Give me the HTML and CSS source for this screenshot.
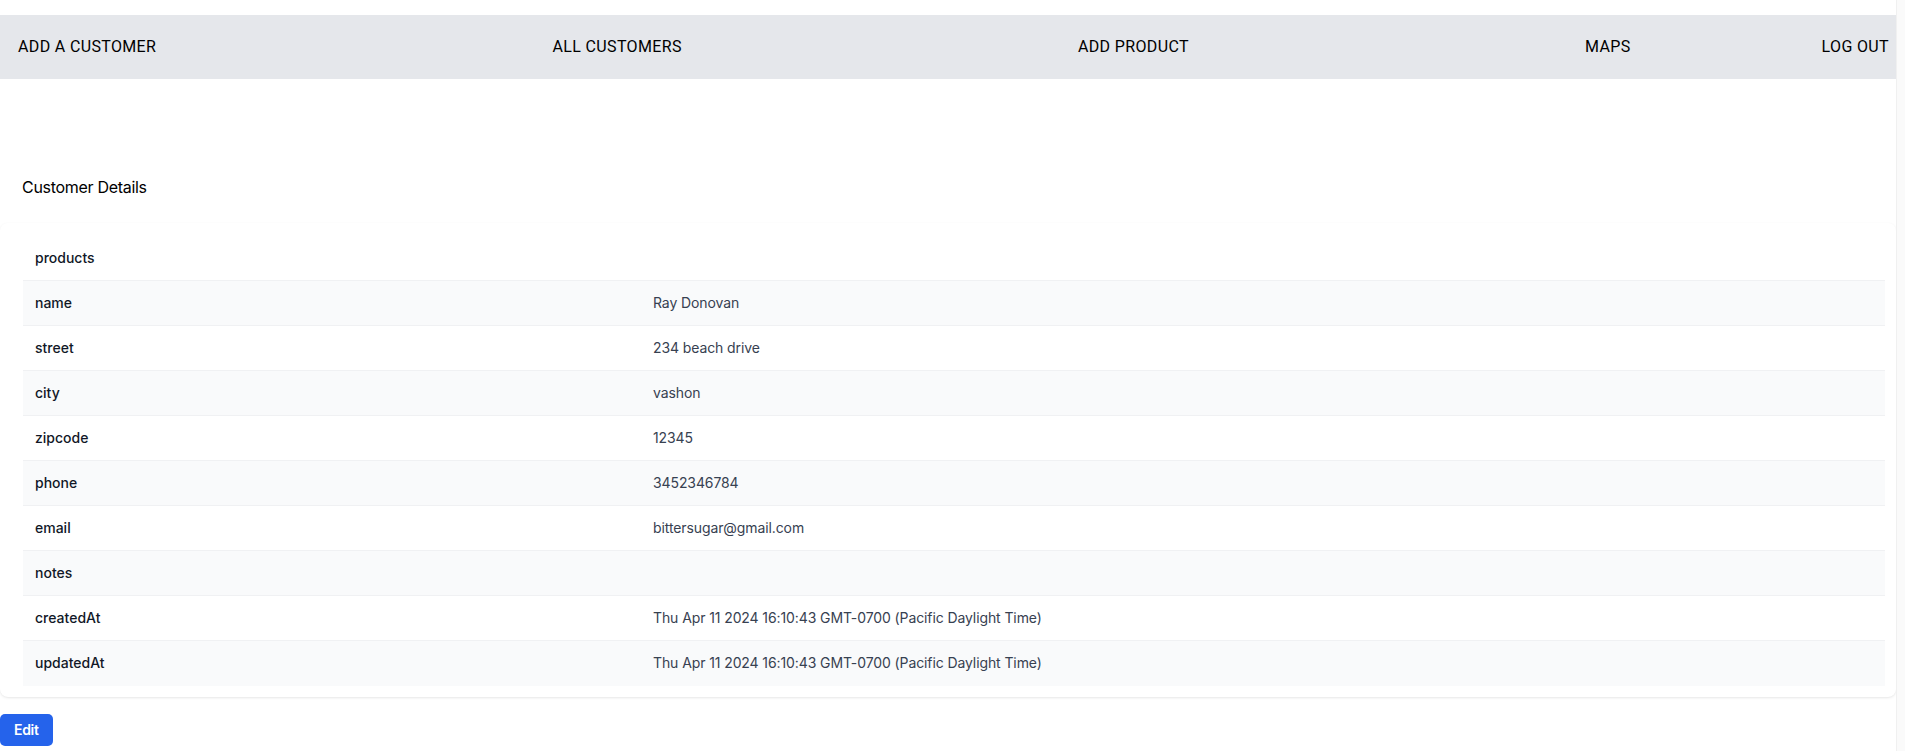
FILE: index.html
```html
<!DOCTYPE html>
<html lang="en">
<head>
<meta charset="utf-8">
<title>Customer Details</title>
<link rel="stylesheet" href="styles.css">
</head>
<body>
  <div class="page">
    <nav class="navbar">
      <a class="nav-link" href="#">ADD A CUSTOMER</a>
      <a class="nav-link" href="#">ALL CUSTOMERS</a>
      <a class="nav-link" href="#">ADD PRODUCT</a>
      <div class="nav-group">
        <a class="nav-link" href="#">MAPS</a>
        <a class="nav-link" href="#">LOG OUT</a>
      </div>
    </nav>

    <main class="content">
      <h2 class="title">Customer Details</h2>
      <section class="card">
        <div class="table">
          <div class="row"><div class="label">products</div><div class="value"></div></div>
          <div class="row"><div class="label">name</div><div class="value">Ray Donovan</div></div>
          <div class="row"><div class="label">street</div><div class="value">234 beach drive</div></div>
          <div class="row"><div class="label">city</div><div class="value">vashon</div></div>
          <div class="row"><div class="label">zipcode</div><div class="value">12345</div></div>
          <div class="row"><div class="label">phone</div><div class="value">3452346784</div></div>
          <div class="row"><div class="label">email</div><div class="value">bittersugar@gmail.com</div></div>
          <div class="row"><div class="label">notes</div><div class="value"></div></div>
          <div class="row"><div class="label">createdAt</div><div class="value">Thu Apr 11 2024 16:10:43 GMT-0700 (Pacific Daylight Time)</div></div>
          <div class="row"><div class="label">updatedAt</div><div class="value">Thu Apr 11 2024 16:10:43 GMT-0700 (Pacific Daylight Time)</div></div>
        </div>
      </section>
      <div class="actions">
        <button class="btn-edit" type="button">Edit</button>
      </div>
    </main>
  </div>
</body>
</html>
```

FILE: styles.css
```css
html {
  background: #fafafa;
}

body {
  margin: 0 8px 0 0;
  border-right: 1px solid #f0f0f0;
  background: #ffffff;
  min-height: 100vh;
  font-family: Inter, "Noto Sans", sans-serif;
  color: #000;
}

.page {
  padding-top: 15px;
}

.navbar {
  display: flex;
  justify-content: space-between;
  align-items: center;
  height: 64px;
  padding: 0 7px 0 18px;
  background: #e5e7eb;
}

.nav-group {
  display: flex;
  gap: 191px;
}

.nav-link {
  font-family: Roboto, "Liberation Sans", sans-serif;
  font-size: 16px;
  letter-spacing: 0.35px;
  color: #000;
  text-decoration: none;
  line-height: 24px;
}

.content {
  padding-top: 96px;
}

.title {
  margin: 0 0 24px 22px;
  font-size: 16px;
  font-weight: 400;
  line-height: 24px;
  letter-spacing: -0.3px;
  color: #000;
}

.card {
  background: #fff;
  border-radius: 8px;
  box-shadow: 0 1px 3px 0 rgba(0, 0, 0, 0.08), 0 1px 2px -1px rgba(0, 0, 0, 0.08);
  padding: 13px 11px 11px 23px;
}

.table {
  display: flex;
  flex-direction: column;
}

.row {
  display: grid;
  grid-template-columns: 618px 1fr;
  border-bottom: 1px solid #f0f1f3;
  font-size: 14px;
  line-height: 20px;
}

.row:nth-child(even) {
  background: #f9fafb;
}

.row:last-child {
  border-bottom: none;
  padding-bottom: 1px;
}

.label {
  padding: 12px;
  font-weight: 500;
  color: #111827;
}

.value {
  padding: 12px;
  color: #374151;
  letter-spacing: -0.1px;
}

.actions {
  padding-top: 17px;
}

.btn-edit {
  font-family: Inter, "Noto Sans", sans-serif;
  font-size: 14px;
  font-weight: 600;
  line-height: 20px;
  letter-spacing: -0.3px;
  color: #fff;
  background: #2563eb;
  border: none;
  border-radius: 5px;
  padding: 6px 14px;
  cursor: pointer;
}
```
